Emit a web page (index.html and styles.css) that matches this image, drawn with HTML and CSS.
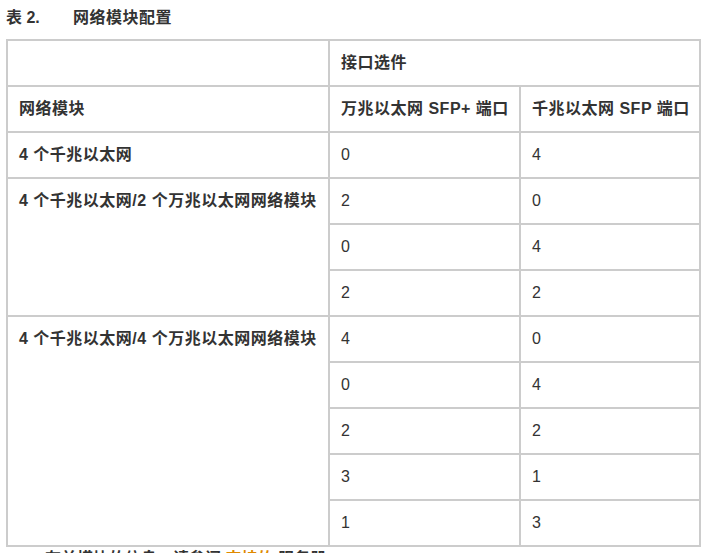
FILE: index.html
```html
<!DOCTYPE html>
<html lang="zh-CN">
<head>
<meta charset="utf-8">
<title>网络模块配置</title>
<link rel="stylesheet" href="styles.css">
</head>
<body>
<div class="caption"><span class="cap-label">表 2.</span><span class="cap-title">网络模块配置</span></div>
<table class="cfg">
  <colgroup>
    <col class="c1">
    <col class="c2">
    <col class="c3">
  </colgroup>
  <tr class="hd">
    <td></td>
    <td colspan="2">接口选件</td>
  </tr>
  <tr class="hd">
    <td>网络模块</td>
    <td>万兆以太网 SFP+ 端口</td>
    <td>千兆以太网 SFP 端口</td>
  </tr>
  <tr>
    <td class="name">4 个千兆以太网</td>
    <td>0</td>
    <td>4</td>
  </tr>
  <tr>
    <td class="name" rowspan="3">4 个千兆以太网/2 个万兆以太网网络模块</td>
    <td>2</td>
    <td>0</td>
  </tr>
  <tr><td>0</td><td>4</td></tr>
  <tr><td>2</td><td>2</td></tr>
  <tr>
    <td class="name" rowspan="5">4 个千兆以太网/4 个万兆以太网网络模块</td>
    <td>4</td>
    <td>0</td>
  </tr>
  <tr><td>0</td><td>4</td></tr>
  <tr><td>2</td><td>2</td></tr>
  <tr><td>3</td><td>1</td></tr>
  <tr><td>1</td><td>3</td></tr>
</table>
<p class="note">有关模块的信息，请参阅 <span class="link">支持的</span> 服务器。</p>
</body>
</html>
```

FILE: styles.css
```css
html, body {
  margin: 0;
  padding: 0;
  background: #fff;
}
body {
  font-family: "Liberation Sans", "Noto Sans CJK SC", sans-serif;
  font-size: 16px;
  color: #333;
}
.caption {
  margin: 8px 0 0 0;
  padding-left: 6px;
  line-height: 20px;
  font-weight: bold;
  white-space: nowrap;
}
.cap-label {
  display: inline-block;
  width: 67px;
}
.cap-title {
  letter-spacing: 0.5px;
}
.cfg {
  margin: 11px 0 0 6px;
  border-collapse: separate;
  border-spacing: 0;
  table-layout: fixed;
  width: 695px;
  border-left: 2px solid #cccccc;
  border-top: 2px solid #cccccc;
}
.cfg col.c1 { width: 322px; }
.cfg col.c2 { width: 191px; }
.cfg col.c3 { width: 180px; }
.cfg td {
  box-sizing: border-box;
  border-right: 2px solid #cccccc;
  border-bottom: 2px solid #cccccc;
  padding: 12px 11px;
  line-height: 20px;
  vertical-align: top;
  text-align: left;
  white-space: nowrap;
}
.cfg tr.hd td,
.cfg td.name {
  font-weight: bold;
  letter-spacing: 0.5px;
}
.note {
  margin: 0;
  padding: 2px 0 0 45px;
  line-height: 20px;
  font-weight: bold;
  white-space: nowrap;
}
.link {
  color: #e08a00;
}
```
